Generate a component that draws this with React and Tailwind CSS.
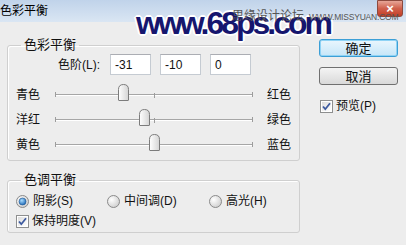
import React from "react";

const sliders = [
  { left: "青色", right: "红色", value: -31 },
  { left: "洋红", right: "绿色", value: -10 },
  { left: "黄色", right: "蓝色", value: 0 },
];

const Thumb = () => (
  <svg width="11" height="17" viewBox="0 0 11 17">
    <defs>
      <linearGradient id="thumbFill" x1="0" y1="0" x2="1" y2="0">
        <stop offset="0" stopColor="#ffffff" />
        <stop offset="1" stopColor="#d4d4d4" />
      </linearGradient>
    </defs>
    <path
      d="M0.5 16 V5.5 Q0.5 0.5 5.5 0.5 Q10.5 0.5 10.5 5.5 V16 Q10.5 16.5 10 16.5 H1 Q0.5 16.5 0.5 16 Z"
      fill="url(#thumbFill)"
      stroke="#7c7c7c"
    />
  </svg>
);

const Slider = ({ value }) => {
  // -100..100 mapped onto the 198px track
  const pos = 99 + (value / 100) * 99;
  return (
    <div className="relative flex h-[25px] w-[198px] items-center">
      <div className="h-[2px] w-full border-t border-b border-t-[#a6a6a6] border-b-white" />
      <div className="absolute left-0 top-[10px] h-[5px] w-px bg-[#9c9c9c]" />
      <div className="absolute left-[99px] top-[11px] h-[5px] w-px bg-[#9c9c9c]" />
      <div className="absolute right-0 top-[10px] h-[5px] w-px bg-[#9c9c9c]" />
      <div className="absolute top-[2px]" style={{ left: pos - 5 }}>
        <Thumb />
      </div>
    </div>
  );
};

const Radio = ({ checked }) => (
  <svg width="13" height="13" viewBox="0 0 13 13">
    <defs>
      <radialGradient id="radioOff" cx="0.35" cy="0.35" r="0.7">
        <stop offset="0" stopColor="#ffffff" />
        <stop offset="1" stopColor="#cfcfcf" />
      </radialGradient>
      <radialGradient id="radioOn" cx="0.4" cy="0.35" r="0.7">
        <stop offset="0" stopColor="#a9dcff" />
        <stop offset="1" stopColor="#1a66b5" />
      </radialGradient>
    </defs>
    <circle cx="6.5" cy="6.5" r="6" fill="url(#radioOff)" stroke="#8a8a8a" />
    {checked && <circle cx="6.5" cy="6.5" r="3.5" fill="url(#radioOn)" stroke="#1b5490" strokeWidth="0.6" />}
  </svg>
);

const Check = () => (
  <svg width="13" height="13" viewBox="0 0 13 13">
    <defs>
      <linearGradient id="chkFill" x1="0" y1="0" x2="1" y2="1">
        <stop offset="0" stopColor="#dcdcdc" />
        <stop offset="1" stopColor="#ffffff" />
      </linearGradient>
    </defs>
    <rect x="0.5" y="0.5" width="12" height="12" fill="#ffffff" stroke="#8e8f8f" />
    <rect x="2" y="2" width="9" height="9" fill="url(#chkFill)" />
    <path d="M3 6.5 L5.3 9.2 L10 3.2" fill="none" stroke="#3d5a9f" strokeWidth="1.8" />
  </svg>
);

export default function App() {
  return (
    <div className="relative h-[245px] w-[406px] overflow-hidden bg-[#ededed] font-['Liberation_Sans','Noto_Sans_CJK_SC',sans-serif] text-[12px] text-[#111]">
      {/* title bar */}
      <div className="flex h-[22px] items-center bg-gradient-to-b from-[#c0d3ea] to-[#dae6f3]">
        <span className="text-[12px] leading-none text-black">色彩平衡</span>
        <div className="ml-auto mr-[3px] flex h-[17px] w-[26px] items-center justify-center self-start rounded-b-[3px] border border-[#8d4a3e] bg-gradient-to-b from-[#e6a597] via-[#d0604c] to-[#c33e25] text-[13px] font-bold leading-none text-white">
          ×
        </div>
      </div>

      {/* watermark */}
      <div className="absolute left-[136px] top-[7px] whitespace-nowrap text-[32px] font-bold leading-none tracking-[-3px] text-[#16166e] [text-shadow:-2px_0_#fff,2px_0_#fff,0_-2px_#fff,0_2px_#fff,-1px_-1px_#fff,1px_1px_#fff,1px_-1px_#fff,-1px_1px_#fff]">
        www.68ps.com
      </div>
      <div className="absolute left-[232px] top-[7px] z-10 flex items-baseline gap-[5px] whitespace-nowrap text-[#555]">
        <span className="text-[12px]">思缘设计论坛</span>
        <span className="text-[8.5px] tracking-[-0.2px]">WWW.MISSYUAN.COM</span>
      </div>

      <div className="flex pt-[15px]">
        {/* left column */}
        <div className="ml-[7px] flex w-[293px] flex-col">
          <fieldset className="rounded-[3px] border border-[#cfcfcf] pb-[3px] pl-[8px] shadow-[inset_1px_1px_0_#fff]">
            <legend className="ml-[5px] px-[3px] text-[13px] leading-[16px]">色彩平衡</legend>
            <div className="mt-[1px] flex items-center">
              <span className="w-[84px] text-right">色阶(L):</span>
              <div className="ml-[10px] flex gap-[9px]">
                {sliders.map((s) => (
                  <div
                    key={s.left}
                    className="flex h-[21px] w-[41px] items-center border border-[#c5cbd2] border-t-[#abadb3] bg-white pl-[4px] text-[12px]"
                  >
                    {s.value}
                  </div>
                ))}
              </div>
            </div>
            <div className="mt-[7px] flex flex-col">
              {sliders.map((s) => (
                <div key={s.left} className="flex h-[25px] items-center">
                  <span className="w-[39px]">{s.left}</span>
                  <Slider value={s.value} />
                  <span className="ml-[14px]">{s.right}</span>
                </div>
              ))}
            </div>
          </fieldset>

          <fieldset className="mt-[11px] rounded-[3px] border border-[#cfcfcf] pb-[2px] pl-[8px] shadow-[inset_1px_1px_0_#fff]">
            <legend className="ml-[5px] px-[3px] text-[13px] leading-[16px]">色调平衡</legend>
            <div className="mt-[4px] flex h-[18px] items-center">
              <div className="flex w-[91px] items-center gap-[4px]">
                <Radio checked />
                <span>阴影(S)</span>
              </div>
              <div className="flex w-[102px] items-center gap-[4px]">
                <Radio />
                <span>中间调(D)</span>
              </div>
              <div className="flex items-center gap-[4px]">
                <Radio />
                <span>高光(H)</span>
              </div>
            </div>
            <div className="mt-[2px] flex h-[18px] items-center gap-[3px]">
              <Check />
              <span>保持明度(V)</span>
            </div>
          </fieldset>
        </div>

        {/* right column */}
        <div className="ml-[19px] flex w-[79px] flex-col pt-[2px]">
          <button className="flex h-[18px] items-center justify-center rounded-[3px] border border-[#3c9fd6] bg-gradient-to-b from-[#eaf6fd] to-[#c6e6f8] text-[13px] leading-none shadow-[inset_0_0_0_1px_#8fd3f5]">
            确定
          </button>
          <button className="mt-[10px] flex h-[18px] items-center justify-center rounded-[3px] border border-[#707070] bg-gradient-to-b from-[#f4f4f4] to-[#d9d9d9] text-[13px] leading-none">
            取消
          </button>
          <div className="mt-[12px] flex h-[18px] items-center gap-[3px] pl-[1px]">
            <Check />
            <span>预览(P)</span>
          </div>
        </div>
      </div>
    </div>
  );
}
